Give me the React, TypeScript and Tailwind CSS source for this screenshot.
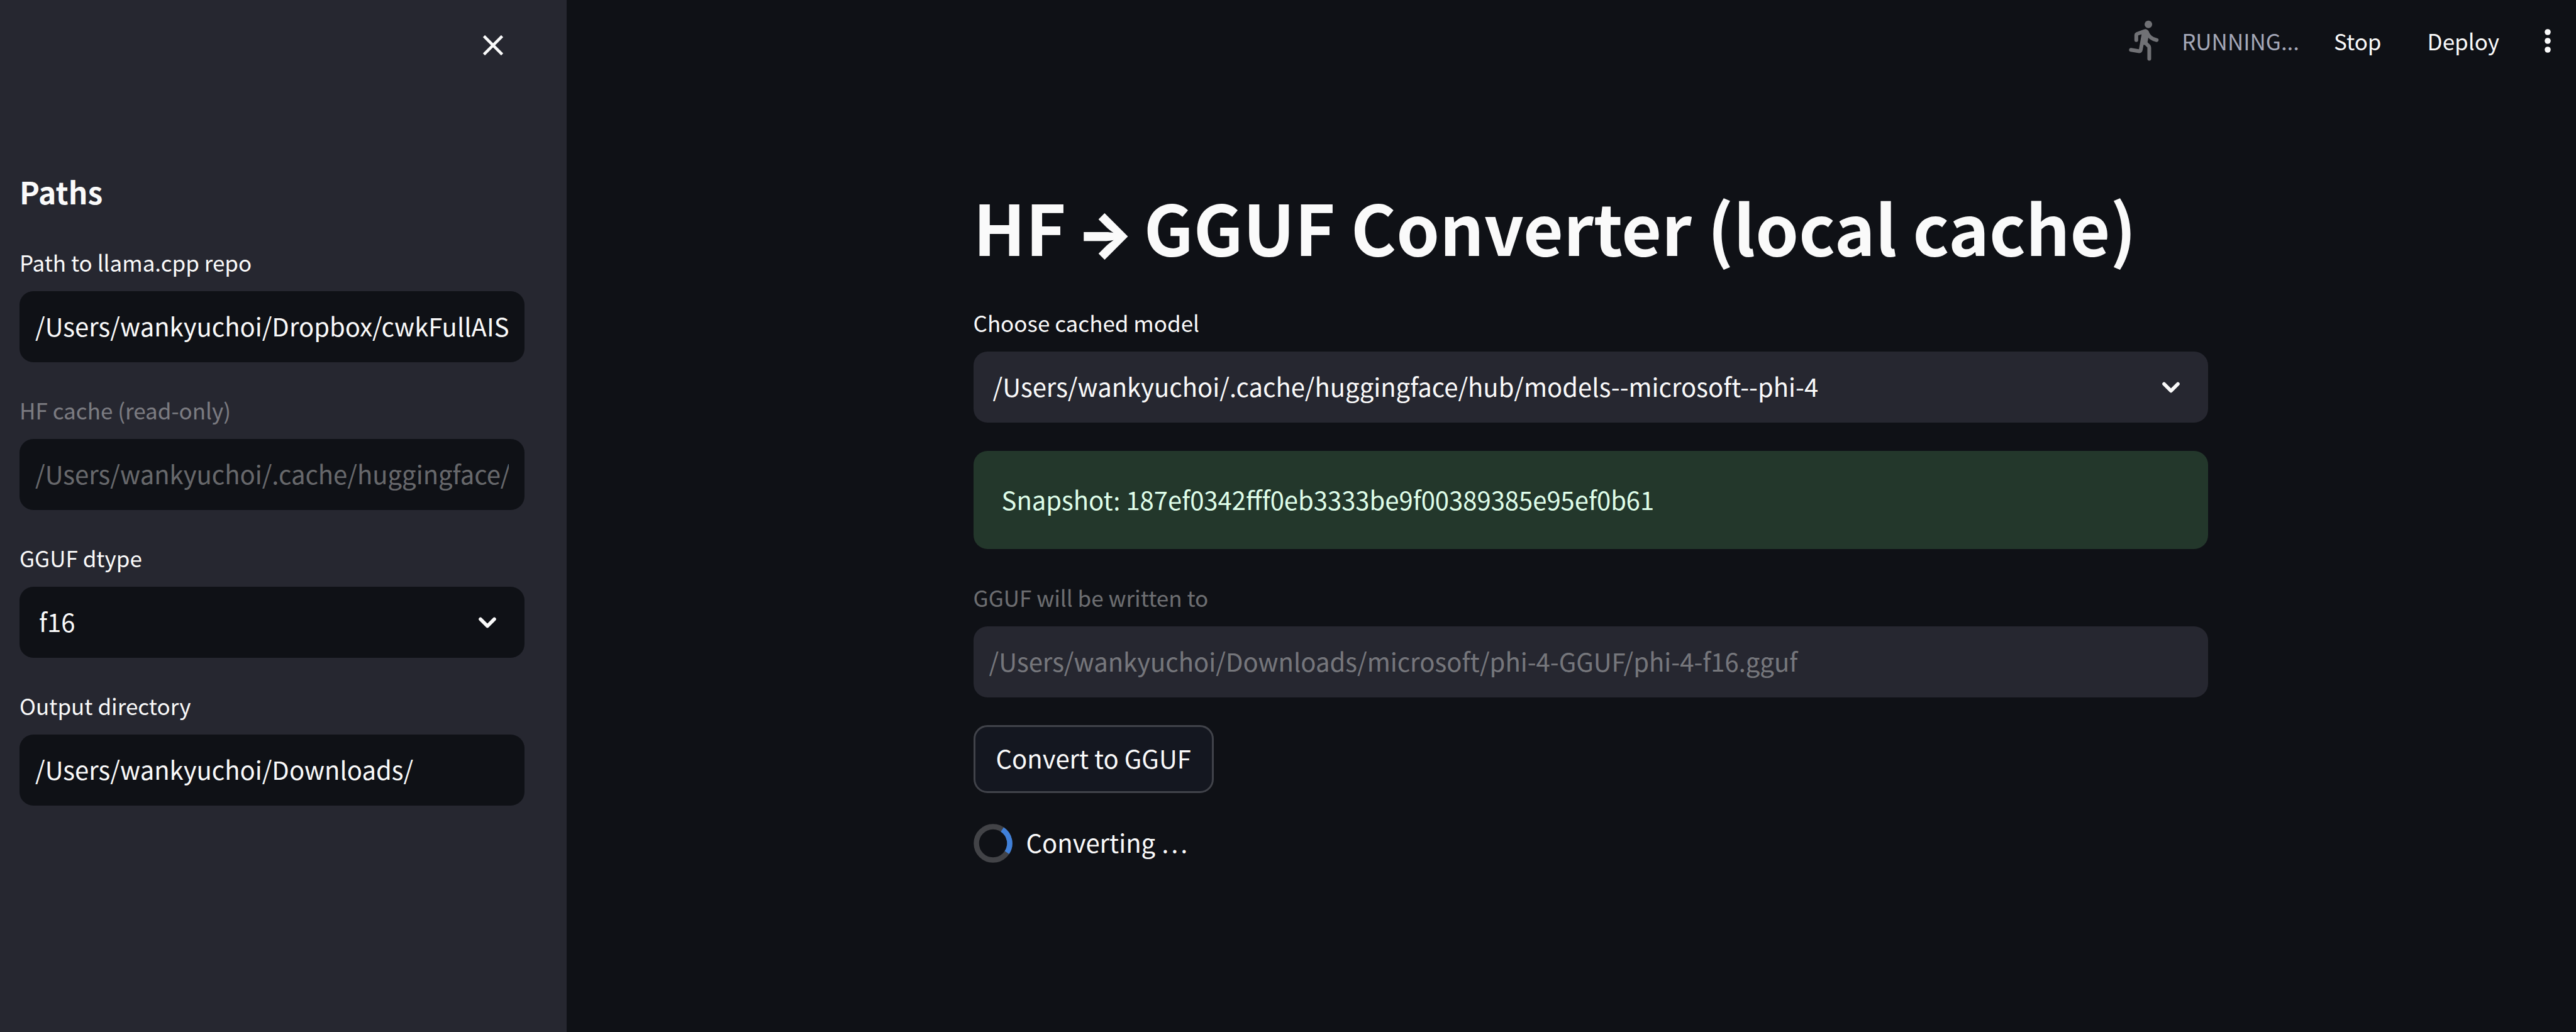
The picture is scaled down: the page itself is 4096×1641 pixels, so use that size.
import { useId, useState, type ReactNode } from "react";

const LABEL = "block text-[35px] leading-[50px] mb-[21px] w-fit";
const FIELD =
  "block w-full h-[113px] rounded-[22px] px-[25px] pb-1 text-[40px] leading-[60px] outline-none appearance-none";

function CloseIcon() {
  return (
    <svg viewBox="0 0 32 32" className="size-8" fill="none" stroke="currentColor" strokeWidth="4.6" aria-hidden="true">
      <path d="M1.5 1.5 30.5 30.5M30.5 1.5 1.5 30.5" />
    </svg>
  );
}

function ChevronIcon() {
  return (
    <svg
      viewBox="0 0 30 20"
      className="w-[30px] h-5"
      fill="none"
      stroke="currentColor"
      strokeWidth="5.6"
      strokeLinecap="round"
      strokeLinejoin="round"
      aria-hidden="true"
    >
      <path d="M4 4.5 15 15.5 26 4.5" />
    </svg>
  );
}

function RunnerIcon() {
  return (
    <svg
      viewBox="100 60 215 285"
      className="w-[50px] h-[66px] text-[#707175]"
      fill="none"
      stroke="currentColor"
      strokeWidth="26"
      strokeLinecap="round"
      strokeLinejoin="round"
      aria-hidden="true"
    >
      <circle cx="238" cy="89" r="26" fill="currentColor" stroke="none" />
      <path d="M155 197V165Q155 157 162 154L212 136Q220 133 226 140" />
      <path d="M228 142Q245 187 295 197" />
      <path d="M118 264 170 273Q183 275 186 262L206 150" />
      <path d="M206 205 240 238Q244 242 244 250V326" />
      <path d="M192 155 216 124 238 134 240 170 231 216 208 232 186 215Z" fill="currentColor" stroke="none" />
    </svg>
  );
}

function MoreIcon() {
  return (
    <svg viewBox="0 0 10 38" className="w-[10px] h-[38px]" fill="currentColor" aria-hidden="true">
      <circle cx="5" cy="5" r="4.8" />
      <circle cx="5" cy="19" r="4.8" />
      <circle cx="5" cy="33" r="4.8" />
    </svg>
  );
}

function Spinner() {
  return (
    <svg viewBox="0 0 62 62" className="size-[62px]" fill="none" strokeWidth="8.5" aria-hidden="true">
      <circle cx="31" cy="31" r="26.5" stroke="#424347" />
      <circle
        cx="31"
        cy="31"
        r="26.5"
        stroke="#4080d9"
        pathLength="360"
        strokeDasharray="90 270"
        transform="rotate(-56.4 31 31)"
      />
    </svg>
  );
}

type FieldProps = { label: string; tone: "sidebar" | "main" };

function TextField({ label, tone, initial, disabled = false }: FieldProps & { initial: string; disabled?: boolean }) {
  const id = useId();
  const [value, setValue] = useState(initial);
  return (
    <div>
      <label htmlFor={id} className={`${LABEL} ${disabled ? "opacity-40" : ""}`}>
        {label}
      </label>
      <input
        id={id}
        type="text"
        value={value}
        disabled={disabled}
        onChange={(e) => setValue(e.target.value)}
        className={`${FIELD} ${tone === "sidebar" ? "bg-[#0f1116]" : "bg-[#262730]"} ${
          disabled ? "text-[#fafafa]/40" : "text-[#fafafa]"
        }`}
      />
    </div>
  );
}

function SelectField({ label, tone, options }: FieldProps & { options: string[] }) {
  const id = useId();
  return (
    <div>
      <label htmlFor={id} className={LABEL}>
        {label}
      </label>
      <div className="relative">
        <select
          id={id}
          className={`${FIELD} pl-[31px] pr-[100px] ${tone === "sidebar" ? "bg-[#0f1116]" : "bg-[#262730]"}`}
        >
          {options.map((option) => (
            <option key={option}>{option}</option>
          ))}
        </select>
        <span className="pointer-events-none absolute inset-y-0 right-11 flex items-center">
          <ChevronIcon />
        </span>
      </div>
    </div>
  );
}

function HeaderButton({ children, label }: { children: ReactNode; label?: string }) {
  return (
    <button type="button" aria-label={label} className="cursor-pointer">
      {children}
    </button>
  );
}

export default function App() {
  return (
    <div className="flex min-h-screen bg-[#0f1116] font-['Noto_Sans_CJK_SC','Noto_Sans',sans-serif] text-[#fafafa]">
      <aside className="w-[22%] shrink-0 bg-[#262730] pl-[31px] pr-[67px]">
        <div className="flex h-[144px] items-center justify-end pr-[34px]">
          <HeaderButton label="Close sidebar">
            <CloseIcon />
          </HeaderButton>
        </div>
        <h2 className="mt-[130px] mb-[58px] text-[48px] leading-[60px] font-semibold">Paths</h2>
        <form className="flex flex-col gap-[51px]">
          <TextField tone="sidebar" label="Path to llama.cpp repo" initial="/Users/wankyuchoi/Dropbox/cwkFullAIStack" />
          <TextField tone="sidebar" label="HF cache (read-only)" initial="/Users/wankyuchoi/.cache/huggingface/hub" disabled />
          <SelectField tone="sidebar" label="GGUF dtype" options={["f16", "bf16", "f32", "q8_0"]} />
          <TextField tone="sidebar" label="Output directory" initial="/Users/wankyuchoi/Downloads/" />
        </form>
      </aside>

      <div className="flex min-w-0 flex-1 flex-col">
        <header className="flex h-[134px] items-center justify-end pr-10 pb-1 text-[35px] leading-[50px]">
          <RunnerIcon />
          <span className="ml-[35px] mr-[55px] text-[#a4a8b8]">RUNNING...</span>
          <HeaderButton>Stop</HeaderButton>
          <span className="w-[73px]" />
          <HeaderButton>Deploy</HeaderButton>
          <span className="w-[72px]" />
          <HeaderButton label="Main menu">
            <MoreIcon />
          </HeaderButton>
        </header>

        <main className="w-full pl-[61px]">
          <div className="mx-auto w-full max-w-[1963px] pt-[159px]">
            <h1 className="mb-[63px] flex items-baseline gap-4 text-[110px] leading-[132px] font-bold">
              <span>HF</span>
              <span className="font-['Inter'] text-[96px] leading-none font-black">→</span>
              <span>GGUF Converter (local cache)</span>
            </h1>
            <SelectField
              tone="main"
              label="Choose cached model"
              options={["/Users/wankyuchoi/.cache/huggingface/hub/models--microsoft--phi-4"]}
            />
            <div
              role="status"
              className="mt-[45px] mb-[52px] rounded-[22px] bg-[#23372b] px-[45px] pt-[47px] pb-[49px] text-[40px] leading-[60px] text-[#dffde9]"
            >
              Snapshot: 187ef0342fff0eb3333be9f00389385e95ef0b61
            </div>
            <TextField
              tone="main"
              label="GGUF will be written to"
              initial="/Users/wankyuchoi/Downloads/microsoft/phi-4-GGUF/phi-4-f16.gguf"
              disabled
            />
            <button
              type="button"
              className="mt-[44px] block h-[108px] cursor-pointer rounded-[22px] border-3 border-[#41434a] bg-[#141720] px-[33px] pb-1 text-[40px] leading-[60px]"
            >
              Convert to GGUF
            </button>
            <div className="mt-[48px] flex items-center gap-[22px] text-[40px] leading-[60px]">
              <Spinner />
              <span className="pb-1">Converting …</span>
            </div>
          </div>
        </main>
      </div>
    </div>
  );
}
